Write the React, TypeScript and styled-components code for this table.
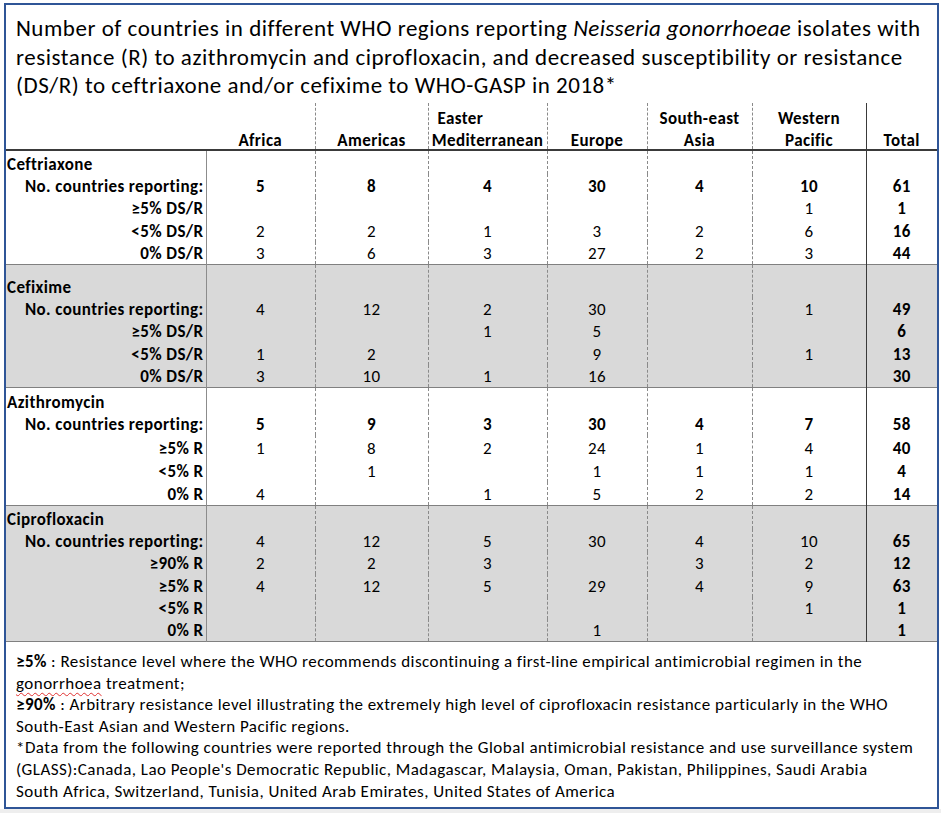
import React from "react";
import styled, { createGlobalStyle } from "styled-components";

type Row = {
  label: string;
  values: (number | "")[];
  bold?: boolean;
};

type Group = {
  title: string;
  shaded: boolean;
  titleHeight: number;
  rowHeight: number;
  rows: Row[];
};

const COLS = [200, 109, 113, 119, 100, 105, 114, 71];

const groups: Group[] = [
  {
    title: "Ceftriaxone",
    shaded: false,
    titleHeight: 24,
    rowHeight: 22.5,
    rows: [
      { label: "No. countries reporting:", values: [5, 8, 4, 30, 4, 10, 61], bold: true },
      { label: "≥5% DS/R", values: ["", "", "", "", "", 1, 1] },
      { label: "<5% DS/R", values: [2, 2, 1, 3, 2, 6, 16] },
      { label: "0% DS/R", values: [3, 6, 3, 27, 2, 3, 44] },
    ],
  },
  {
    title: "Cefixime",
    shaded: true,
    titleHeight: 33,
    rowHeight: 22.5,
    rows: [
      { label: "No. countries reporting:", values: [4, 12, 2, 30, "", 1, 49] },
      { label: "≥5% DS/R", values: ["", "", 1, 5, "", "", 6] },
      { label: "<5% DS/R", values: [1, 2, "", 9, "", 1, 13] },
      { label: "0% DS/R", values: [3, 10, 1, 16, "", "", 30] },
    ],
  },
  {
    title: "Azithromycin",
    shaded: false,
    titleHeight: 25,
    rowHeight: 23.25,
    rows: [
      { label: "No. countries reporting:", values: [5, 9, 3, 30, 4, 7, 58], bold: true },
      { label: "≥5% R", values: [1, 8, 2, 24, 1, 4, 40] },
      { label: "<5% R", values: ["", 1, "", 1, 1, 1, 4] },
      { label: "0% R", values: [4, "", 1, 5, 2, 2, 14] },
    ],
  },
  {
    title: "Ciprofloxacin",
    shaded: true,
    titleHeight: 24,
    rowHeight: 22.5,
    rows: [
      { label: "No. countries reporting:", values: [4, 12, 5, 30, 4, 10, 65] },
      { label: "≥90% R", values: [2, 2, 3, "", 3, 2, 12] },
      { label: "≥5% R", values: [4, 12, 5, 29, 4, 9, 63] },
      { label: "<5% R", values: ["", "", "", "", "", 1, 1] },
      { label: "0% R", values: ["", "", "", 1, "", "", 1] },
    ],
  },
];

type Sep = "none" | "solid" | "dashed" | "dark";

// left border of each column, body and header
const bodySep: Sep[] = ["none", "solid", "dashed", "dashed", "dashed", "dashed", "dashed", "dark"];
const headSep: Sep[] = ["none", "none", "dashed", "dashed", "dashed", "dashed", "dashed", "dark"];

const sepStyle = (s: Sep) => {
  switch (s) {
    case "solid":
      return "1px solid #8c8c8c";
    case "dashed":
      return "1px dashed #8a8a8a";
    case "dark":
      return "1px solid #3a3a3a";
    default:
      return "none";
  }
};

const headers: { lines: string[]; indentFirst?: boolean }[] = [
  { lines: [] },
  { lines: ["Africa"] },
  { lines: ["Americas"] },
  { lines: ["Easter", "Mediterranean"], indentFirst: true },
  { lines: ["Europe"] },
  { lines: ["South-east", "Asia"] },
  { lines: ["Western", "Pacific"] },
  { lines: ["Total"] },
];

export default function App() {
  return (
    <>
      <GlobalStyle />
      <Frame>
        <Title>
          Number of countries in different WHO regions reporting <Species>Neisseria gonorrhoeae</Species> isolates with
          <br />
          resistance (R) to azithromycin and ciprofloxacin, and decreased susceptibility or resistance
          <br />
          (DS/R) to ceftriaxone and/or cefixime to WHO-GASP in 2018*
        </Title>

        <Table>
          <colgroup>
            {COLS.map((w, i) => (
              <Col key={i} $w={w} />
            ))}
          </colgroup>
          <thead>
            <tr>
              {headers.map((h, i) => (
                <HeadCell key={i} $sep={headSep[i]}>
                  <HeadStack>
                    {h.lines.map((line, j) => (
                      <HeadLine key={line} $indent={h.indentFirst && j === 0}>
                        {line}
                      </HeadLine>
                    ))}
                  </HeadStack>
                </HeadCell>
              ))}
            </tr>
          </thead>
          {groups.map((g) => (
            <GroupBody key={g.title} $shaded={g.shaded}>
              <SizedRow $h={g.titleHeight}>
                <GroupTitle>{g.title}</GroupTitle>
                {COLS.slice(1).map((_, i) => (
                  <ValueCell key={i} $sep={bodySep[i + 1]} />
                ))}
              </SizedRow>
              {g.rows.map((r) => (
                <SizedRow key={r.label} $h={g.rowHeight}>
                  <RowLabel>{r.label}</RowLabel>
                  {r.values.map((v, i) => (
                    <ValueCell key={i} $sep={bodySep[i + 1]} $bold={r.bold || i === 6}>
                      {v}
                    </ValueCell>
                  ))}
                </SizedRow>
              ))}
            </GroupBody>
          ))}
        </Table>

        <Notes>
          <NoteLine>
            <b>≥5%</b> : Resistance level where the WHO recommends discontinuing a first-line empirical antimicrobial regimen in the
          </NoteLine>
          <NoteLine>
            <Misspelt>gonorrhoea</Misspelt> treatment;
          </NoteLine>
          <NoteLine>
            <b>≥90%</b> : Arbitrary resistance level illustrating the extremely high level of ciprofloxacin resistance particularly in the WHO
          </NoteLine>
          <NoteLine>South-East Asian and Western Pacific regions.</NoteLine>
          <NoteLine $track={0.47}>
            *Data from the following countries were reported through the Global antimicrobial resistance and use surveillance system
          </NoteLine>
          <NoteLine>
            (GLASS):Canada, Lao People's Democratic Republic, Madagascar, Malaysia, Oman, Pakistan, Philippines, Saudi Arabia
          </NoteLine>
          <NoteLine>South Africa, Switzerland, Tunisia, United Arab Emirates, United States of America</NoteLine>
        </Notes>
      </Frame>
      <Shelf />
    </>
  );
}

const GlobalStyle = createGlobalStyle`
  html, body {
    margin: 0;
    padding: 0;
    background: #ffffff;
  }
  body {
    font-family: Calibri, Carlito, Lato, "Open Sans", sans-serif;
    color: #000;
  }
`;

const Frame = styled.div`
  box-sizing: border-box;
  width: 935px;
  height: 806px;
  margin: 3px 0 0 4px;
  border: 2px solid #2f5597;
  background: #fff;
  display: flex;
  flex-direction: column;
  overflow: hidden;
`;

const Shelf = styled.div`
  height: 4px;
  background: #eeeeee;
`;

const Title = styled.div`
  height: 98px;
  box-sizing: border-box;
  padding: 9px 0 0 10px;
  font-size: 23px;
  letter-spacing: 0.52px;
  line-height: 28.5px;
  white-space: nowrap;
`;

const Species = styled.i`
  letter-spacing: 0.35px;
`;

const Table = styled.table`
  width: 931px;
  table-layout: fixed;
  border-collapse: collapse;
  font-size: 17px;
  letter-spacing: 0.4px;
`;

const Col = styled.col<{ $w: number }>`
  width: ${(p) => p.$w}px;
`;

const HeadCell = styled.th<{ $sep: Sep }>`
  height: 46px;
  padding: 0;
  vertical-align: bottom;
  text-align: center;
  font-weight: 700;
  line-height: 22px;
  white-space: nowrap;
  border-left: ${(p) => sepStyle(p.$sep)};
  border-bottom: 2px solid #3a3a3a;
`;

const HeadStack = styled.div`
  margin-bottom: -3px;
`;

const HeadLine = styled.div<{ $indent?: boolean }>`
  text-align: ${(p) => (p.$indent ? "left" : "center")};
  padding-left: ${(p) => (p.$indent ? "9px" : "0")};
`;

const GroupBody = styled.tbody<{ $shaded: boolean }>`
  background: ${(p) => (p.$shaded ? "#d9d9d9" : "#ffffff")};
  border-top: 1px solid #808080;
  border-bottom: 1px solid #808080;
`;

const SizedRow = styled.tr<{ $h: number }>`
  height: ${(p) => p.$h}px;
`;

const GroupTitle = styled.td`
  padding: 0 0 0 1px;
  vertical-align: bottom;
  font-weight: 700;
  line-height: 18px;
  white-space: nowrap;
`;

const RowLabel = styled.td`
  padding: 0 2px 0 0;
  vertical-align: bottom;
  text-align: right;
  font-weight: 700;
  line-height: 20px;
  white-space: nowrap;
`;

const ValueCell = styled.td<{ $sep: Sep; $bold?: boolean }>`
  padding: 0;
  vertical-align: bottom;
  text-align: center;
  line-height: 20px;
  font-weight: ${(p) => (p.$bold ? 700 : 400)};
  border-left: ${(p) => sepStyle(p.$sep)};
`;

const Notes = styled.div`
  flex: 1;
  padding: 9px 0 0 10px;
  font-size: 17px;
  line-height: 21.6px;
  white-space: nowrap;
`;

const NoteLine = styled.div<{ $track?: number }>`
  letter-spacing: ${(p) => p.$track ?? 0.45}px;
`;

const Misspelt = styled.span`
  text-decoration: underline wavy #e03030;
  text-decoration-thickness: 1px;
  text-underline-offset: 3px;
`;
